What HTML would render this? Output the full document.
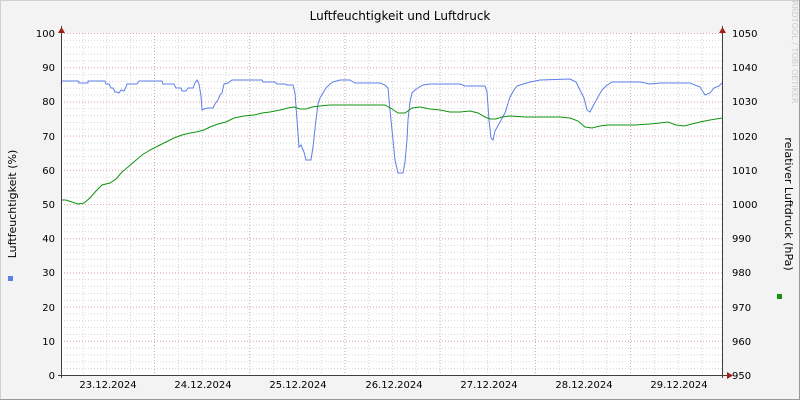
<!DOCTYPE html>
<html><head><meta charset="utf-8"><style>
html,body{margin:0;padding:0;background:#f3f3f3}
svg{display:block;font-family:"DejaVu Sans","Liberation Sans",sans-serif}
</style></head><body>
<svg width="800" height="400" viewBox="0 0 800 400" xmlns="http://www.w3.org/2000/svg">
<defs>
<pattern id="hmin" x="61" y="33" width="700" height="6.84" patternUnits="userSpaceOnUse">
<line x1="0" y1="0.5" x2="700" y2="0.5" stroke="#d4d4d4" stroke-width="1" stroke-dasharray="1,2"/>
</pattern>
<pattern id="hmaj" x="61" y="33" width="700" height="34.2" patternUnits="userSpaceOnUse">
<line x1="0" y1="0.5" x2="700" y2="0.5" stroke="#e3a6a6" stroke-width="1" stroke-dasharray="1,2"/>
</pattern>
<pattern id="vmin" x="82.6" y="33" width="23.8" height="400" patternUnits="userSpaceOnUse">
<line x1="0.5" y1="0" x2="0.5" y2="400" stroke="#d4d4d4" stroke-width="1" stroke-dasharray="1,2"/>
</pattern>
<pattern id="vmaj" x="154" y="33" width="95.2" height="400" patternUnits="userSpaceOnUse">
<line x1="0.5" y1="0" x2="0.5" y2="400" stroke="#e3a6a6" stroke-width="1" stroke-dasharray="1,2"/>
</pattern>
</defs>
<rect x="0" y="0" width="800" height="400" fill="#f3f3f3"/>
<rect x="0.5" y="0.5" width="799" height="399" fill="none" stroke="#d0d0d0"/>
<line x1="0" y1="399.5" x2="800" y2="399.5" stroke="#999"/>
<line x1="799.5" y1="0" x2="799.5" y2="400" stroke="#999"/>
<rect x="61" y="33" width="662" height="342" fill="#fff"/>
<rect x="61" y="33" width="662" height="342" fill="url(#hmin)"/>
<rect x="61" y="33" width="662" height="342" fill="url(#vmin)"/>
<rect x="61" y="33" width="662" height="342" fill="url(#hmaj)"/>
<rect x="61" y="33" width="662" height="342" fill="url(#vmaj)"/>
<polyline fill="none" stroke="#5b7fe8" stroke-width="1" points="61,84 62,81 78,81 79,83 88,83 88,81 105,81 106,84 109,84 111,88 113,88 115,92 117,92 119,93 121,90 124,91 126,87 127,84 137,84 139,81 162,81 163,84 174,84 176,88 181,88 182,91 186,91 188,88 193,88 195,83 197,80 199,84 201,96 202,110 204,109 208,108 213,108 215,104 218,100 220,95 222,93 224,84 228,83 232,80 262,80 263,82 275,82 277,84 285,84 287,85 293,85 295,93 297,120 299,147 301,145 304,152 306,160 311,160 313,147 316,120 318,104 320,98 323,93 326,88 330,84 333,82 340,80 350,80 355,83 380,83 385,85 388,88 390,110 393,140 395,160 398,173 403,173 405,162 407,140 408,120 410,102 412,93 415,90 418,88 423,85 430,84 460,84 465,86 485,86 487,92 489,120 491,138 493,140 495,131 500,122 505,113 510,97 514,90 517,86 520,85 530,82 540,80 570,79 576,82 580,90 584,98 587,110 590,112 593,106 598,97 602,90 606,86 612,82 640,82 650,84 660,83 690,83 700,87 705,95 710,93 714,88 719,86 722,83"/>
<polyline fill="none" stroke="#119311" stroke-width="1" points="61,200 66,200 72,202 78,204 84,203 90,198 96,191 102,185 110,183 116,179 122,172 128,167 135,161 142,155 150,150 158,146 166,142 174,138 182,135 190,133 196,132 204,130 210,127 218,124 226,122 234,118 244,116 254,115 262,113 270,112 280,110 288,108 294,107 300,109 306,109 312,107 320,106 330,105 345,105 360,105 372,105 385,105 392,109 398,113 405,113 412,108 420,107 430,109 440,110 450,112 460,112 470,111 478,113 485,117 490,119 496,119 502,117 510,116 525,117 540,117 560,117 570,118 578,121 585,127 592,128 600,126 608,125 620,125 635,125 650,124 660,123 668,122 676,125 684,126 692,124 700,122 710,120 722,118"/>
<line x1="61.5" y1="26" x2="61.5" y2="378" stroke="#404040"/>
<line x1="722.5" y1="26" x2="722.5" y2="378" stroke="#404040"/>
<line x1="58" y1="375.5" x2="728" y2="375.5" stroke="#404040"/>
<polygon points="58,33 65,33 61.5,27" fill="#a02020"/>
<polygon points="719,33 726,33 722.5,27" fill="#a02020"/>
<polygon points="727,372 727,379 733,375.5" fill="#a02020"/>
<g font-size="10" fill="#000" text-anchor="end">
<text x="55" y="37">100</text><text x="55" y="71">90</text><text x="55" y="105">80</text><text x="55" y="140">70</text><text x="55" y="174">60</text><text x="55" y="208">50</text><text x="55" y="242">40</text><text x="55" y="276">30</text><text x="55" y="311">20</text><text x="55" y="345">10</text><text x="55" y="379">0</text>
</g>
<g font-size="10" fill="#000">
<text x="732" y="37">1050</text><text x="732" y="71">1040</text><text x="732" y="105">1030</text><text x="732" y="140">1020</text><text x="732" y="174">1010</text><text x="732" y="208">1000</text><text x="732" y="242">990</text><text x="732" y="276">980</text><text x="732" y="311">970</text><text x="732" y="345">960</text><text x="732" y="379">950</text>
</g>
<g font-size="10" fill="#000" text-anchor="middle">
<text x="108" y="388">23.12.2024</text><text x="203" y="388">24.12.2024</text><text x="298" y="388">25.12.2024</text><text x="394" y="388">26.12.2024</text><text x="489" y="388">27.12.2024</text><text x="584" y="388">28.12.2024</text><text x="679" y="388">29.12.2024</text>
</g>
<text x="400" y="20" font-size="12" text-anchor="middle" fill="#000">Luftfeuchtigkeit und Luftdruck</text>
<text transform="translate(16,204) rotate(-90)" font-size="11" text-anchor="middle" fill="#000">Luftfeuchtigkeit (%)</text>
<text transform="translate(785,204) rotate(90)" font-size="11" text-anchor="middle" fill="#000">relativer Luftdruck (hPa)</text>
<text transform="translate(792,52) rotate(90)" font-size="8" text-anchor="middle" fill="#ccc">RRDTOOL / TOBI OETIKER</text>
<rect x="8" y="276" width="5" height="5" fill="#5b7fe8"/>
<rect x="777" y="294" width="5" height="5" fill="#119311"/>
</svg>
</body></html>
